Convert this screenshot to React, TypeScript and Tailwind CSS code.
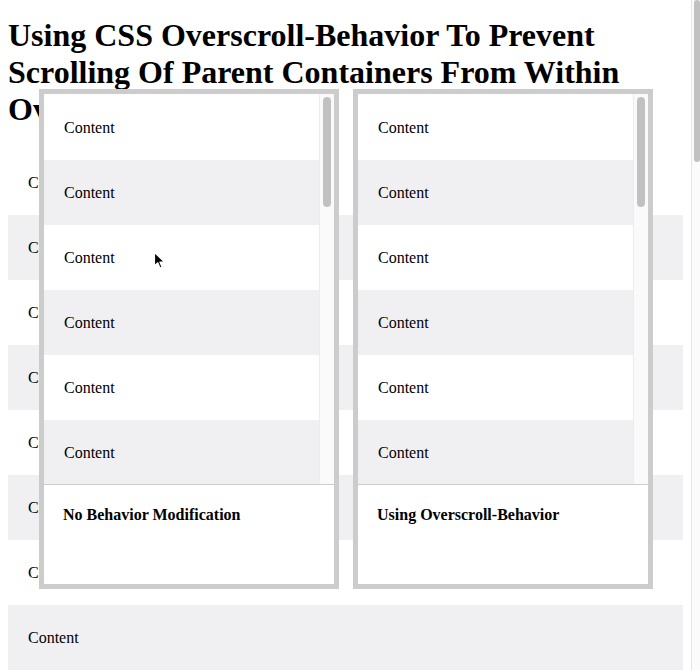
import React from "react";

const serif = { fontFamily: '"Liberation Serif", "Times New Roman", serif' };

const PAGE_ROWS = 10;
const PANEL_ROWS = 6;

function Row({ i, text = "Content" }: { i: number; text?: string }) {
  return (
    <div
      className={`flex h-[65px] shrink-0 items-center pl-5 text-[16px] ${
        i % 2 === 1 ? "bg-[#f0f0f3]" : "bg-white"
      }`}
    >
      {text}
    </div>
  );
}

function Panel({ label }: { label: string }) {
  return (
    <div className="flex h-[500px] w-[300px] flex-col border-[5px] border-[#cccccc] bg-white">
      {/* Scrolling list */}
      <div className="flex h-[390px] overflow-hidden">
        <div className="flex flex-1 flex-col pt-[1px]">
          {Array.from({ length: PANEL_ROWS }).map((_, i) => (
            <Row key={i} i={i} />
          ))}
        </div>
        {/* scrollbar */}
        <div className="w-[15px] shrink-0 border-l border-[#ececec] bg-[#fafafa] pt-[3px] pl-[3px]">
          <div className="h-[110px] w-[8px] rounded-full bg-[#c1c1c1]" />
        </div>
      </div>
      <div className="flex-1 border-t border-[#cccccc] pl-[19px] pt-[18px] text-[16px] font-bold">
        {label}
      </div>
    </div>
  );
}

function Cursor() {
  return (
    <svg
      className="absolute left-[153px] top-[251px]"
      width="13"
      height="19"
      viewBox="0 0 13 19"
    >
      <path
        d="M1.5 1.5 L1.5 15 L4.8 11.8 L7 17 L9 16.1 L6.9 11 L11.5 11 Z"
        fill="#000"
        stroke="#fff"
        strokeWidth="1.2"
        strokeLinejoin="round"
      />
    </svg>
  );
}

export default function App() {
  return (
    <div className="relative flex h-[670px] w-[700px] overflow-hidden bg-white text-black" style={serif}>
      {/* Page */}
      <div className="flex-1 overflow-hidden px-2">
        <h1 className="pt-[17px] pb-[22px] text-[32px] leading-[37px] font-bold">
          Using CSS Overscroll-Behavior To Prevent Scrolling Of Parent Containers From Within Overflow Containers
        </h1>
        <div className="flex flex-col">
          {Array.from({ length: PAGE_ROWS }).map((_, i) => (
            <Row key={i} i={i} />
          ))}
        </div>
      </div>

      {/* Page scrollbar */}
      <div className="w-[9px] shrink-0 border-l border-[#e6e6e6] bg-[#fbfbfb] pl-[2px]">
        <div className="h-[162px] w-[6px] rounded-full bg-[#c1c1c1]" />
      </div>

      {/* Fixed overlay panels */}
      <div className="absolute left-[39px] top-[89px] flex gap-[14px]">
        <Panel label="No Behavior Modification" />
        <Panel label="Using Overscroll-Behavior" />
      </div>

      <Cursor />
    </div>
  );
}
